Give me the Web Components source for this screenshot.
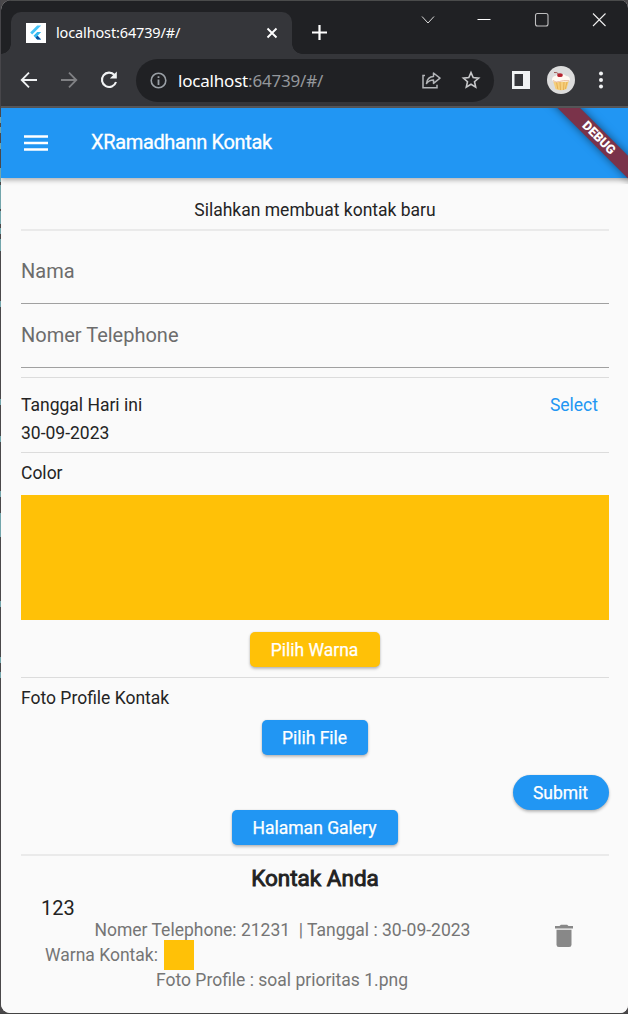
<!DOCTYPE html>
<html lang="id">
<head>
<meta charset="utf-8">
<title>XRamadhann Kontak</title>
<style>
html,body{margin:0;padding:0;width:628px;height:1014px;overflow:hidden;background:#2b2b2d}
body{font-family:Roboto,"Liberation Sans",sans-serif}
</style>
</head>
<body>
<app-window>
  <browser-tabs slot="chrome">localhost:64739/#/</browser-tabs>
  <browser-toolbar slot="chrome" host="localhost" path=":64739/#/"></browser-toolbar>
  <app-bar>XRamadhann Kontak</app-bar>
  <contact-page></contact-page>
</app-window>
<script>
const define=(name,css,html)=>customElements.define(name,class extends HTMLElement{
  constructor(){
    super();
    const t=document.createElement('template');
    t.innerHTML=`<style>*{box-sizing:border-box}:host{display:block;box-sizing:border-box}svg{display:block;flex:none}${css}</style>${typeof html==='function'?html(this):html}`;
    this.attachShadow({mode:'open'}).append(t.content.cloneNode(true));
  }
});

define('app-window',`
:host{width:628px;height:1014px;padding:0 0 1px 1px;background:linear-gradient(#47464a,#47464a) 0 0/1px 106px no-repeat,linear-gradient(#444,#444) 0 1013px/628px 1px no-repeat,
 linear-gradient(#72a5ab 0 0) 0 117px/1px 6px no-repeat,linear-gradient(#72a5ab 0 0) 0 127px/1px 6px no-repeat,linear-gradient(#72a5ab 0 0) 0 143px/1px 6px no-repeat,linear-gradient(#72a5ab 0 0) 0 168px/1px 14px no-repeat,linear-gradient(#72a5ab 0 0) 0 185px/1px 24px no-repeat,linear-gradient(#72a5ab 0 0) 0 211px/1px 13px no-repeat,linear-gradient(#72a5ab 0 0) 0 228px/1px 6px no-repeat,linear-gradient(#72a5ab 0 0) 0 239px/1px 12px no-repeat,linear-gradient(#72a5ab 0 0) 0 301px/1px 6px no-repeat,linear-gradient(#72a5ab 0 0) 0 399px/1px 6px no-repeat,linear-gradient(#72a5ab 0 0) 0 436px/1px 6px no-repeat,linear-gradient(#72a5ab 0 0) 0 491px/1px 6px no-repeat,linear-gradient(#72a5ab 0 0) 0 513px/1px 24px no-repeat,linear-gradient(#72a5ab 0 0) 0 601px/1px 6px no-repeat,linear-gradient(#72a5ab 0 0) 0 657px/1px 6px no-repeat,linear-gradient(#72a5ab 0 0) 0 672px/1px 6px no-repeat,#4a484a}
.win{height:1013px;border-radius:10px 8px 8px 9px;overflow:hidden;background:#fafafa;display:flex;flex-direction:column}
`,`<div class="win"><slot name="chrome"></slot><slot></slot></div>`);

define('browser-tabs',`
:host{height:54px;background:#202124;border-top:1px solid #4a4b4b;color:#fff;font-family:"Noto Sans","Open Sans",sans-serif}
.row{display:flex;height:53px;padding-left:10px}
.tab{position:relative;width:281px;height:42px;margin-top:11px;border-radius:10px 10px 0 0;background:#35363a;display:flex;align-items:center;padding-left:15px}
.tab:before,.tab:after{content:"";position:absolute;bottom:0;width:10px;height:10px}
.tab:before{left:-10px;background:radial-gradient(circle at 0 0,transparent 9.5px,#35363a 10px)}
.tab:after{right:-10px;background:radial-gradient(circle at 100% 0,transparent 9.5px,#35363a 10px)}
.title{font-size:14.5px;line-height:20px;margin:-2px 0 0 10px;width:209px;letter-spacing:-.14px;white-space:nowrap}
.plus{margin:24px 0 0 20px}
.ctl{display:flex;margin:10px 0 0 93px;height:18px}
`,`<div class="row"><div class="tab">
<svg width="20" height="20" viewBox="0 0 20 20"><rect width="20" height="20" fill="#fff"/><path d="M11.2 2.6h4L6.2 11.5l-2-2z" fill="#45c4f8"/><path d="M11.2 9.1h4L11.6 12.8l3.5 3.7h-4l-3.6-3.7z" fill="#35b8ef"/><path d="M9.6 14.7l2-1.9 3.5 3.7h-4z" fill="#0b4c9a"/></svg>
<span class="title"><slot></slot></span>
<svg width="14" height="14" viewBox="0 0 14 14"><path d="M2.5 2.5l9 9m0-9l-9 9" stroke="#fff" stroke-width="1.9"/></svg>
</div>
<svg class="plus" width="15" height="15" viewBox="0 0 15 15"><path d="M7.5 0v15M0 7.5h15" stroke="#fff" stroke-width="2.2"/></svg>
<div class="ctl">
<svg width="16" height="18" viewBox="0 0 16 18"><path d="M2 5.5l6 6.5 6-6.5" fill="none" stroke="#ddd" stroke-width="1"/></svg>
<svg width="16" height="18" viewBox="0 0 16 18" style="margin-left:40px"><path d="M1.5 8.5h13" stroke="#fff"/></svg>
<svg width="16" height="18" viewBox="0 0 16 18" style="margin-left:42px"><rect x="1.5" y="2.5" width="12.5" height="12.5" rx="2" fill="none" stroke="#bfbfc0" stroke-width="1.1"/></svg>
<svg width="16" height="18" viewBox="0 0 16 18" style="margin-left:41px"><path d="M2 2.5l12.5 12.5m0-12.5L2 15" stroke="#eee" stroke-width="1.1"/></svg>
</div></div>`);

define('browser-toolbar',`
:host{height:54px;background:#35363a;border-bottom:2px solid #59595c;font-family:"Noto Sans","Open Sans",sans-serif}
.row{display:flex;align-items:center;height:52px;padding-left:18px}
.omni{display:flex;align-items:center;width:358px;height:43px;margin-left:16px;border-radius:22px;background:#202124;padding-left:14px}
.url{font-size:17px;line-height:24px;margin:1px 0 0 11px;width:243px;letter-spacing:-.2px;color:#94979b;white-space:nowrap}
b{font-weight:400;color:#fff}
`,h=>`<div class="row">
<svg width="20" height="20" viewBox="0 0 20 20"><path d="M18 10H3M10 2.7L2.7 10l7.3 7.3" fill="none" stroke="#f1f3f4" stroke-width="1.8"/></svg>
<svg width="20" height="20" viewBox="0 0 20 20" style="margin-left:20px"><path d="M2 10h15M10 2.7l7.3 7.3-7.3 7.3" fill="none" stroke="#808184" stroke-width="1.8"/></svg>
<svg width="22" height="20" viewBox="0 0 22 20" style="margin-left:19px"><path d="M16.5 5A7.2 7.2 0 1 0 18 12" fill="none" stroke="#f1f3f4" stroke-width="2.1"/><path d="M18.8 1.6v7h-7z" fill="#f1f3f4"/></svg>
<div class="omni">
<svg width="17" height="17" viewBox="0 0 17 17"><circle cx="8.5" cy="8.5" r="7.3" fill="none" stroke="#9aa0a6" stroke-width="1.6"/><path d="M8.5 7.5V13M8.5 4.3v1.8" stroke="#9aa0a6" stroke-width="1.8"/></svg>
<div class="url"><b>${h.getAttribute('host')}</b>${h.getAttribute('path')}</div>
<svg width="22" height="20" viewBox="0 0 22 20"><path d="M4 5.5H2v12.3h14v-3" fill="none" stroke="#b3b5b8" stroke-width="1.5"/><path d="M5.5 13.5c.6-4.7 3-6.7 7-6.9V3L19 8.2l-6.5 5.2V10c-3.2 0-5.2 1-7 3.5z" fill="none" stroke="#b3b5b8" stroke-width="1.5" stroke-linejoin="round"/></svg>
<svg width="20" height="20" viewBox="0 0 20 20" style="margin-left:18px"><path d="M10 2.6l2.2 5 5.4.5-4.1 3.6 1.2 5.4L10 14.3l-4.7 2.8 1.2-5.4L2.4 8.1l5.4-.5z" fill="none" stroke="#c7c8ca" stroke-width="1.6"/></svg>
</div>
<svg width="18" height="18" viewBox="0 0 18 18" style="margin-left:18px"><path d="M0 0h18v18H0zM2.5 3v12H11V3z" fill="#f1f3f4" fill-rule="evenodd"/></svg>
<svg width="28" height="28" viewBox="0 0 28 28" style="margin-left:17px"><circle cx="14" cy="14" r="14" fill="#dcdcdc"/><path d="M6 14.5h16L19.5 23q-5.5 2.5-11 0z" fill="#f5cf7d"/><path d="M9.5 16l1.3 7M13 16l.5 8M17 16l-.5 8M20 16l-1.7 7" stroke="#e3a849" stroke-width=".8"/><path d="M5 14c0-3 1.5-4 3.5-4C10 7.5 17 7.2 19 10c3 0 4.2 2 4 4-2.5 3-6 1-9 2-3.5 0-7.5 1-9-2z" fill="#fffaf2"/><path d="M6 14.5q3 2.5 6.5 1t9.5-.8" fill="none" stroke="#e4ad91" stroke-width=".8"/><path d="M7 6.5q3-.8 5 2" fill="none" stroke="#974e48" stroke-width=".9"/><ellipse cx="13" cy="9.2" rx="2.8" ry="1.9" fill="#b52330"/></svg>
<svg width="6" height="18" viewBox="0 0 6 18" style="margin-left:23px"><g fill="#f1f3f4"><circle cx="3" cy="2.5" r="2"/><circle cx="3" cy="9" r="2"/><circle cx="3" cy="15.5" r="2"/></g></svg>
</div>`);

define('app-bar',`
:host{position:relative;z-index:1;height:70px;flex:none;background:#2196f3;box-shadow:0 2px 5px rgba(0,0,0,.32);color:#fff}
.row{display:flex;height:70px;align-items:center;padding-left:23px}
.t{font-size:20px;font-weight:400;letter-spacing:-.35px;-webkit-text-stroke:.3px #fff;line-height:28px;margin:-2px 0 0 43px;white-space:nowrap}
.clip{position:absolute;right:0;top:0;width:90px;height:76px;overflow:hidden}
.ban{position:absolute;width:140px;height:15.5px;left:-8.7px;top:21.5px;transform:rotate(45deg);background:#7a334a;box-shadow:0 0 8px rgba(0,0,0,.5);font-size:12.75px;font-weight:900;line-height:15.5px;text-align:center}
`,`<div class="row"><svg width="24" height="18" viewBox="0 0 24 18"><path d="M0 2.5h24M0 9h24M0 15.5h24" stroke="#fff" stroke-width="2.5"/></svg><div class="t"><slot></slot></div></div>
<div class="clip"><div class="ban">DEBUG</div></div>`);

define('hair-line',`:host{height:1px;background:#dcdcdc}:host([thick]){height:2px;background:#eaeaea}`,``);
define('text-field',`:host{height:64px;padding:13px 0 0;border-bottom:1px solid #a0a0a0;font-size:20px;line-height:28px;color:#6c6c6c}`,`<slot></slot>`);
define('raised-button',`
:host{display:flex;align-items:center;justify-content:center;height:35px;padding:2px 1px 0 0;border-radius:5px;background:var(--fill,#2196f3);color:#fff;font-size:17.5px;font-weight:400;-webkit-text-stroke:.25px #fff;box-shadow:0 2px 3px rgba(0,0,0,.24),0 0 2px rgba(0,0,0,.12);white-space:nowrap}
:host([pill]){border-radius:18px}`,`<slot></slot>`);
define('contact-item',`
:host{position:relative;height:110px;color:#757575;font-size:17.5px;line-height:25px;white-space:nowrap}
.grid{display:grid;grid-template-columns:1fr 78px;height:110px}
.name{font-size:20px;line-height:30px;color:#222;padding-left:20px;height:25px}
.a{padding-left:73.5px;height:25px;white-space:pre}
.b{display:flex;padding-left:24px;height:25px;line-height:25px;overflow:visible}
.sw{width:30px;height:30px;margin:-3px 0 0 5.6px;background:#ffc107}
.c{padding-left:135px;line-height:25px}
svg{margin:31px 0 0 24px}
`,`<div class="grid"><div><div class="name">123</div><div class="a">Nomer Telephone: 21231  | Tanggal : 30-09-2023</div><div class="b"><span>Warna Kontak:</span><div class="sw"></div></div><div class="c">Foto Profile : soal prioritas 1.png</div></div>
<svg width="18" height="24" viewBox="0 0 18 24"><path d="M0 2h4.5l1.4-1.3h6.2L13.5 2H18v2.5H0zM1.5 5.7h15v15q0 2.3-2.3 2.3H3.8q-2.3 0-2.3-2.3z" fill="#888"/></svg></div>`);

define('contact-page',`
:host{flex:1;background:#fafafa;padding:0 19px 0 20px;color:#242424;font-size:17.5px;line-height:25px}
.intro{height:51px;padding-top:20px;text-align:center}
.date{display:flex;justify-content:space-between;height:74px;padding:13px 11px 0 0;line-height:28px}
.date span{color:#2196f3}
.color{height:42px;padding-top:8px}
.box{height:125px;background:#ffc107}
.mid{display:flex;justify-content:center}
h1{margin:0;height:37px;padding-top:7px;font-size:22.5px;font-weight:400;line-height:30px;text-align:center;-webkit-text-stroke:.9px #212121}
`,`
<div class="intro">Silahkan membuat kontak baru</div>
<hair-line thick></hair-line>
<text-field style="height:73px;padding-top:26px">Nama</text-field>
<text-field style="padding-top:17px">Nomer Telephone</text-field>
<hair-line style="margin-top:9px"></hair-line>
<div class="date"><div>Tanggal Hari ini<br>30-09-2023</div><span>Select</span></div>
<hair-line></hair-line>
<div class="color">Color</div>
<div class="box"></div>
<div class="mid" style="padding:12.4px 0 0"><raised-button style="width:129.4px;padding-top:1px;--fill:#ffc107">Pilih Warna</raised-button></div>
<hair-line style="margin-top:9.6px"></hair-line>
<div style="height:42px;padding-top:8px">Foto Profile Kontak</div>
<div class="mid"><raised-button style="width:106px">Pilih File</raised-button></div>
<div style="display:flex;justify-content:flex-end;padding-top:20px"><raised-button pill style="width:96px">Submit</raised-button></div>
<div class="mid"><raised-button style="width:165.4px">Halaman Galery</raised-button></div>
<hair-line thick style="margin-top:9px"></hair-line>
<h1>Kontak Anda</h1>
<contact-item></contact-item>`);
</script>
</body>
</html>
